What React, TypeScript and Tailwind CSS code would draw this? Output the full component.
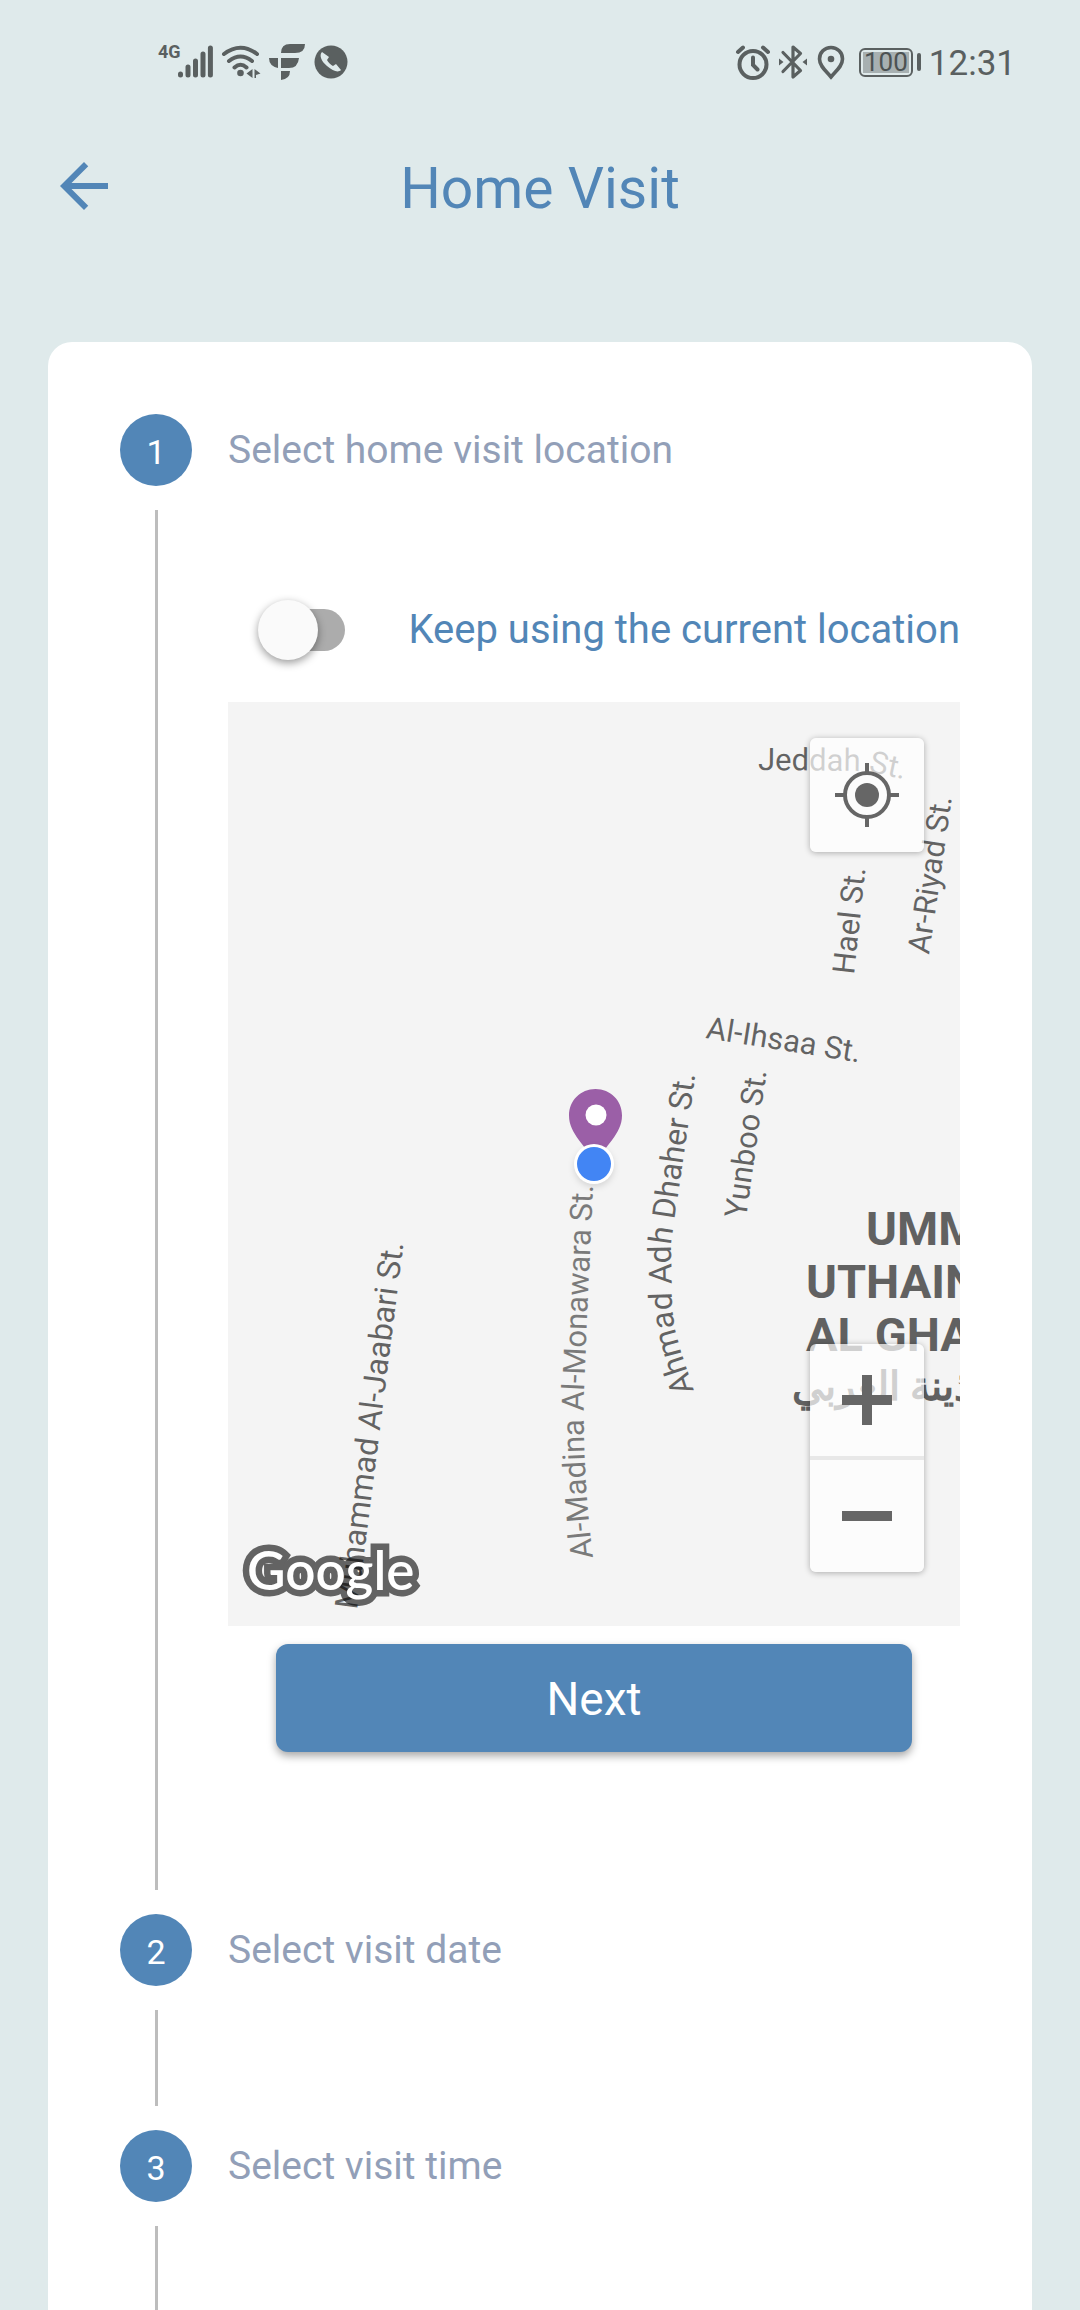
import { useState, type ReactNode } from "react";

const street = "fill-black/60 text-[31px]";
const longStreet = "fill-black/60 text-[32px]";

function StatusBar() {
  return (
    <div className="flex h-[124px] items-center justify-between pr-16 pl-[158px] text-[#5a6060]">
      <div className="flex items-center">
        <span className="self-start text-[18px] leading-[16px] font-bold">4G</span>
        <svg className="-ml-1 h-9 w-9" viewBox="0 0 36 36" stroke="currentColor" strokeWidth="5" strokeLinecap="round" aria-hidden="true">
          <path d="M3.500 30v1M11 23v8M18.500 17v14M26 10v21M33.400 4v27" />
        </svg>
        <svg className="ml-2 h-9 w-10" viewBox="0 0 40 36" fill="none" stroke="currentColor" strokeWidth="4" strokeLinecap="round" aria-hidden="true">
          <path d="M3 10Q19.500-2.500 36 10M8 17Q19.500 8 31 17M13.500 23.500Q19.500 18 25.500 23.500" />
          <circle cx="19.500" cy="29" r="3.300" fill="currentColor" stroke="none" />
          <path d="M31.500 25v9l-6-4.500zM33.500 25v9l1.500 0V31l4.500-1.500z" fill="currentColor" stroke="none" />
        </svg>
        <svg className="ml-2 h-9 w-9" viewBox="0 0 36 36" fill="currentColor" aria-hidden="true">
          <path d="M12 9Q12 0 21 0H36Q36 9 26 9zM0 14H9V24Q0 22 0 14zM12 14H30Q29 24 20 24H12zM12 27H21Q21 35 12 36z" />
        </svg>
        <svg className="ml-2 h-9 w-9" viewBox="0 0 36 36" aria-hidden="true">
          <circle cx="18" cy="18" r="16.500" fill="currentColor" />
          <path d="M9 8c-3 3-1 9 5 14s11 7 14 4l-5-6-3 2c-2-1-5-4-6-6l2-3z" fill="#dfeaeb" />
        </svg>
      </div>
      <div className="flex items-center">
        <svg className="h-9 w-9" viewBox="0 0 36 36" fill="none" stroke="currentColor" strokeWidth="4" strokeLinecap="round" aria-hidden="true">
          <circle cx="18" cy="20.500" r="13.500" />
          <path d="M3 8l5-4.500M33 8l-5-4.500M18 13.500v7.500l4.500 4.500" />
        </svg>
        <svg className="ml-2 h-9 w-7" viewBox="0 0 28 36" fill="none" stroke="currentColor" strokeWidth="3.200" strokeLinejoin="round" aria-hidden="true">
          <path d="M4 8.500l17.500 18L14 33V3l7.500 6.500L4 27.500" strokeLinecap="round" />
          <path d="M0 14.500l4.500 3.500L0 21.500zM28 14.500l-4.500 3.500 4.500 3.500z" fill="currentColor" stroke="none" />
        </svg>
        <svg className="ml-2 h-9 w-8" viewBox="0 0 32 36" aria-hidden="true">
          <path d="M16 3.500c-6.500 0-11.500 5-11.500 11.500C4.500 22 11 27 16 33c5-6 11.500-11 11.500-18C27.500 8.500 22.500 3.500 16 3.500z" fill="none" stroke="currentColor" strokeWidth="3.600" />
          <circle cx="16" cy="15" r="3.300" fill="currentColor" />
        </svg>
        <div className="ml-3 flex items-center gap-1">
          <div className="flex h-[29px] w-[54px] items-center justify-center rounded-md border-2 border-current p-[2px]">
            <span className="flex h-full w-full items-center justify-center bg-[#a7b0b1] text-[26px] leading-none text-[#4c5253]">100</span>
          </div>
          <span className="h-[18px] w-1 rounded-sm bg-current" />
        </div>
        <span className="ml-2 pt-[2px] text-[35px] leading-none">12:31</span>
      </div>
    </div>
  );
}

function Step({ number, title, children, className }: { number: number; title: string; children?: ReactNode; className?: string }) {
  return (
    <li className={"flex gap-9 " + (className ?? "")}>
      <div className="flex w-[72px] shrink-0 flex-col items-center">
        <span className="flex h-[72px] w-[72px] items-center justify-center rounded-full bg-[#5286b7] pt-1 text-[34px] leading-none text-white">
          {number}
        </span>
        <span className="my-6 w-[3px] flex-1 bg-[#bdbdbd]" />
      </div>
      <div className="min-w-0 flex-1">
        <h2 className="flex h-[72px] items-center text-[39px] leading-none text-[#929fb8]">{title}</h2>
        {children}
      </div>
    </li>
  );
}

function StreetMap() {
  return (
    <div className="relative h-[924px] overflow-hidden bg-[#f4f4f4]">
      <svg className="h-full w-full" viewBox="228 702 732 924" preserveAspectRatio="xMidYMid slice" role="img" aria-label="Map">
        <defs>
          <path id="jeddah" d="M758 770L865 771L960 791" />
          <path id="hael" d="M854 975L868 845" />
          <path id="riyad" d="M929 955L956 770" />
          <path id="ihsaa" d="M705 1038L900 1069" />
          <path id="yunboo" d="M746 1219L771 1040" />
          <path id="dhaher" d="M694 1391C683 1355 673 1335 672 1300L671 1243L702 1030" />
          <path id="monawara" d="M593 1558C585 1490 583 1440 584 1390L595 1140" />
          <path id="jaabari" d="M357 1610L409 1200" />
        </defs>
        <text className={street}><textPath href="#jeddah">Jeddah St.</textPath></text>
        <text className={street}><textPath href="#hael">Hael St.</textPath></text>
        <text className={street}><textPath href="#riyad">Ar-Riyad St.</textPath></text>
        <text className={street}><textPath href="#ihsaa">Al-Ihsaa St.</textPath></text>
        <text className={street}><textPath href="#yunboo">Yunboo St.</textPath></text>
        <text className={longStreet}><textPath href="#dhaher">Ahmad Adh Dhaher St.</textPath></text>
        <text className="fill-black/50 text-[31px]"><textPath href="#monawara">Al-Madina Al-Monawara St.</textPath></text>
        <g className="fill-[#616161] text-[47px] font-bold">
          <text x="866" y="1245">UMM</text>
          <text x="806" y="1298">UTHAINA</text>
          <text x="806" y="1351">AL GHARBI</text>
          <text x="792" y="1400" direction="rtl" textAnchor="end" className="text-[40px]">أم أذينة الغربي</text>
        </g>
        <g className="fill-[#636363] stroke-[#636363]" strokeWidth="13">
          <text id="wordmark" x="247" y="1590" className="font-['Lato'] text-[53px] font-semibold">Google</text>
        </g>
        <text className={longStreet}><textPath href="#jaabari">Muhammad Al-Jaabari St.</textPath></text>
        <use href="#wordmark" className="fill-white" />
        <path d="M595.500 1089c-15 0-26.500 11.500-26.500 26.500 0 19 17 29 26.500 49.500 9.500-20.500 26.500-30.500 26.500-49.500 0-15-11.500-26.500-26.500-26.500z" fill="#9b5fa7" />
        <circle cx="596" cy="1115" r="10.500" fill="#fff" />
        <circle cx="594" cy="1164" r="20" fill="#fff" className="drop-shadow-md" />
        <circle cx="594" cy="1164" r="17" fill="#4285f4" />
      </svg>
      <button aria-label="My location" className="absolute top-9 right-9 flex h-[114px] w-[114px] items-center justify-center rounded-md bg-white/70 shadow-[0_1px_6px_rgba(0,0,0,0.3)]">
        <svg className="h-16 w-16" viewBox="0 0 64 64" fill="none" stroke="#666" strokeWidth="4">
          <circle cx="32" cy="32" r="22" />
          <circle cx="32" cy="32" r="12" fill="#666" stroke="none" />
          <path d="M32 0v9M32 55v9M0 32h9M55 32h9" />
        </svg>
      </button>
      <div className="absolute right-9 bottom-[54px] w-[114px] rounded-md bg-white/70 shadow-[0_1px_6px_rgba(0,0,0,0.3)]">
        <button aria-label="Zoom in" className="flex h-[116px] w-full items-center justify-center border-b-4 border-[#e8e8e8]">
          <svg className="h-[50px] w-[50px]" viewBox="0 0 50 50" stroke="#666" strokeWidth="10"><path d="M25 0v50M0 25h50" /></svg>
        </button>
        <button aria-label="Zoom out" className="flex h-[112px] w-full items-center justify-center">
          <svg className="h-[50px] w-[50px]" viewBox="0 0 50 50" stroke="#666" strokeWidth="10"><path d="M0 25h50" /></svg>
        </button>
      </div>
    </div>
  );
}

export default function App() {
  const [keep, setKeep] = useState(false);
  return (
    <div className="flex min-h-screen flex-col bg-[#dfeaeb] font-['Roboto',sans-serif]">
      <StatusBar />
      <header className="grid h-[124px] grid-cols-[72px_1fr_72px] items-center px-12 text-[#5286b7]">
        <button aria-label="Back">
          <svg className="h-[72px] w-[72px]" viewBox="0 0 24 24" fill="currentColor">
            <path d="M20 11H7.830l5.590-5.590L12 4l-8 8 8 8 1.410-1.410L7.830 13H20v-2z" />
          </svg>
        </button>
        <h1 className="pt-1 text-center text-[57px] leading-none">Home Visit</h1>
      </header>
      <main className="mx-12 mt-[94px] flex flex-1 flex-col rounded-t-3xl bg-white px-[72px] pt-[72px]">
        <ol className="flex flex-1 flex-col">
          <Step number={1} title="Select home visit location">
            <label className="mt-24 flex h-24 items-center justify-between pl-[33px] text-[40px] leading-none whitespace-nowrap text-[#5286b7]">
              <input
                type="checkbox"
                role="switch"
                checked={keep}
                onChange={(e) => setKeep(e.target.checked)}
                className="relative h-[42px] w-[84px] shrink-0 appearance-none rounded-full bg-[#acacac] before:absolute before:-top-[9px] before:-left-[3px] before:h-[60px] before:w-[60px] before:rounded-full before:bg-[#fafafa] before:shadow-[0_3px_8px_rgba(0,0,0,0.4)] checked:bg-[#a9c3db] checked:before:left-[27px]"
              />
              Keep using the current location
            </label>
            <div className="mt-6">
              <StreetMap />
            </div>
            <div className="px-12 pt-[18px] pb-[162px]">
              <button className="h-[108px] w-full rounded-xl bg-[#5286b7] pt-[2px] text-[46px] leading-none text-white shadow-[0_4px_8px_rgba(0,0,0,0.35)]">
                Next
              </button>
            </div>
          </Step>
          <Step number={2} title="Select visit date" className="min-h-[216px]" />
          <Step number={3} title="Select visit time" className="-mb-6 min-h-[204px] flex-1" />
        </ol>
      </main>
    </div>
  );
}
